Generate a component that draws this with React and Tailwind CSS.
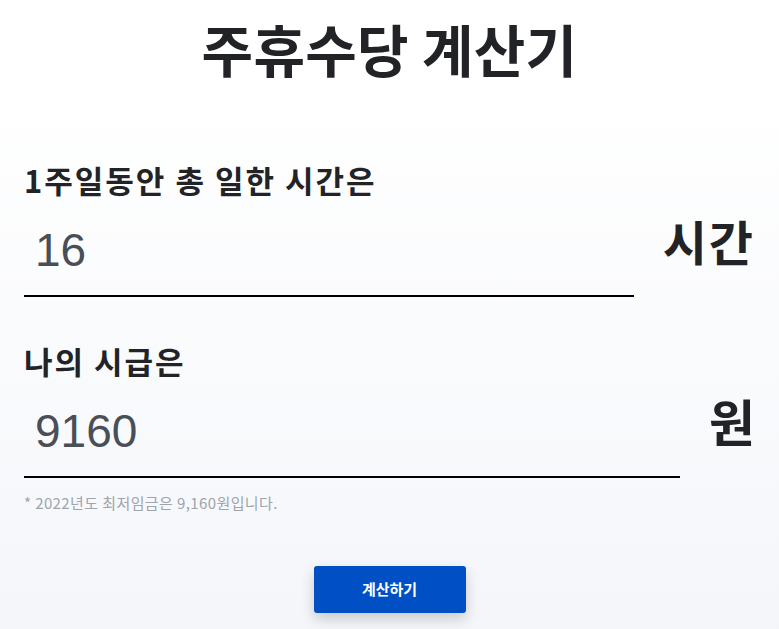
import React from "react";

export default function App() {
  return (
    <div
      className="min-h-[629px] w-full bg-gradient-to-b from-white from-[15%] to-[#f4f6fa] text-[#222327]"
      style={{ fontFamily: '"Noto Sans CJK KR", "Noto Sans", sans-serif' }}
    >
      <h1 className="pt-[16px] text-center text-[56px] font-bold leading-[64px] tracking-[0.3px]">
        주휴수당 계산기
      </h1>

      <div className="pl-6 pr-[24px]">
        <div className="mt-[80px]">
          <label className="block text-[31px] font-bold leading-[40px] tracking-[2px]">
            1주일동안 총 일한 시간은
          </label>
          <div className="mt-[15px] flex items-center">
            <div className="flex-1 border-b-2 border-black">
              <input
                defaultValue="16"
                className="h-[80px] w-full bg-transparent pb-[10px] pl-[11px] text-[46px] text-[#4a4e57] outline-none"
                style={{ fontFamily: '"Liberation Sans", Arial, sans-serif' }}
              />
            </div>
            <span className="ml-[29px] -mt-[32px] text-[48px] font-bold leading-none tracking-[2px]">시간</span>
          </div>
        </div>

        <div className="mt-[44px]">
          <label className="block text-[31px] font-bold leading-[40px] tracking-[2px]">
            나의 시급은
          </label>
          <div className="mt-[15px] flex items-center">
            <div className="flex-1 border-b-2 border-black">
              <input
                defaultValue="9160"
                className="h-[80px] w-full bg-transparent pb-[10px] pl-[11px] text-[46px] text-[#4a4e57] outline-none"
                style={{ fontFamily: '"Liberation Sans", Arial, sans-serif' }}
              />
            </div>
            <span className="ml-[29px] -mt-[34px] text-[50px] font-bold leading-none">원</span>
          </div>
          <p className="mt-[15px] text-[15px] leading-[20px] tracking-[0.4px] text-[#a0a4ab]">
            * 2022년도 최저임금은 9,160원입니다.
          </p>
        </div>
      </div>

      <div className="mt-[53px] flex justify-center pb-[16px]">
        <button className="h-[47px] w-[152px] rounded-[3px] bg-[#004fc4] text-[15px] font-bold text-white shadow-[0_6px_14px_rgba(0,0,0,0.18)]">
          계산하기
        </button>
      </div>
    </div>
  );
}
